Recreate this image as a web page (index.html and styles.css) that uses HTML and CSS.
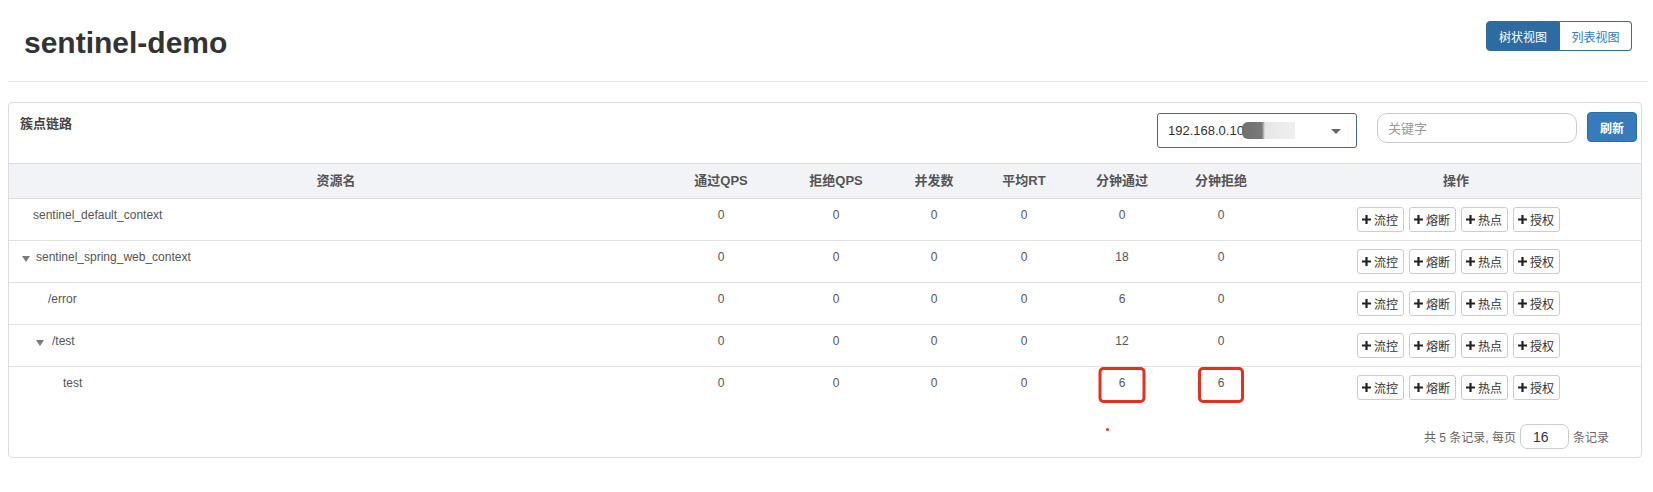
FILE: index.html
```html
<!DOCTYPE html>
<html lang="zh-CN">
<head>
<meta charset="utf-8">
<title>sentinel-demo</title>
<link rel="stylesheet" href="styles.css">
</head>
<body>
<div class="page">
  <div class="top">
    <h1 class="title">sentinel-demo</h1>
    <div class="toggle">
      <button class="tg active">树状视图</button><button class="tg">列表视图</button>
    </div>
  </div>
  <div class="rule"></div>
  <div class="panel">
    <div class="panel-head">
      <div class="panel-title">簇点链路</div>
      <div class="tools">
        <div class="select"><span class="ip">192.168.0.10</span><span class="redact"></span><span class="caret"></span></div>
        <input class="search" type="text" placeholder="关键字">
        <button class="refresh">刷新</button>
      </div>
    </div>
    <table class="grid">
      <colgroup>
        <col class="c-name"><col class="c-pass"><col class="c-block"><col class="c-thread"><col class="c-rt"><col class="c-mpass"><col class="c-mblock"><col class="c-op">
      </colgroup>
      <thead>
        <tr>
          <th>资源名</th><th>通过QPS</th><th>拒绝QPS</th><th>并发数</th><th>平均RT</th><th>分钟通过</th><th>分钟拒绝</th><th>操作</th>
        </tr>
      </thead>
      <tbody>
        <tr>
          <td class="name"><span class="node l0">sentinel_default_context</span></td>
          <td>0</td><td>0</td><td>0</td><td>0</td><td>0</td><td>0</td>
          <td class="ops">
            <div class="btns">
              <button class="op"><svg class="plus" viewBox="0 0 9 9"><path d="M3.4 0h2.2v3.4H9v2.2H5.6V9H3.4V5.6H0V3.4h3.4z"/></svg>流控</button>
              <button class="op"><svg class="plus" viewBox="0 0 9 9"><path d="M3.4 0h2.2v3.4H9v2.2H5.6V9H3.4V5.6H0V3.4h3.4z"/></svg>熔断</button>
              <button class="op"><svg class="plus" viewBox="0 0 9 9"><path d="M3.4 0h2.2v3.4H9v2.2H5.6V9H3.4V5.6H0V3.4h3.4z"/></svg>热点</button>
              <button class="op"><svg class="plus" viewBox="0 0 9 9"><path d="M3.4 0h2.2v3.4H9v2.2H5.6V9H3.4V5.6H0V3.4h3.4z"/></svg>授权</button>
            </div>
          </td>
        </tr>
        <tr>
          <td class="name"><span class="node l0a"><span class="arrow"></span>sentinel_spring_web_context</span></td>
          <td>0</td><td>0</td><td>0</td><td>0</td><td>18</td><td>0</td>
          <td class="ops">
            <div class="btns">
              <button class="op"><svg class="plus" viewBox="0 0 9 9"><path d="M3.4 0h2.2v3.4H9v2.2H5.6V9H3.4V5.6H0V3.4h3.4z"/></svg>流控</button>
              <button class="op"><svg class="plus" viewBox="0 0 9 9"><path d="M3.4 0h2.2v3.4H9v2.2H5.6V9H3.4V5.6H0V3.4h3.4z"/></svg>熔断</button>
              <button class="op"><svg class="plus" viewBox="0 0 9 9"><path d="M3.4 0h2.2v3.4H9v2.2H5.6V9H3.4V5.6H0V3.4h3.4z"/></svg>热点</button>
              <button class="op"><svg class="plus" viewBox="0 0 9 9"><path d="M3.4 0h2.2v3.4H9v2.2H5.6V9H3.4V5.6H0V3.4h3.4z"/></svg>授权</button>
            </div>
          </td>
        </tr>
        <tr>
          <td class="name"><span class="node l1">/error</span></td>
          <td>0</td><td>0</td><td>0</td><td>0</td><td>6</td><td>0</td>
          <td class="ops">
            <div class="btns">
              <button class="op"><svg class="plus" viewBox="0 0 9 9"><path d="M3.4 0h2.2v3.4H9v2.2H5.6V9H3.4V5.6H0V3.4h3.4z"/></svg>流控</button>
              <button class="op"><svg class="plus" viewBox="0 0 9 9"><path d="M3.4 0h2.2v3.4H9v2.2H5.6V9H3.4V5.6H0V3.4h3.4z"/></svg>熔断</button>
              <button class="op"><svg class="plus" viewBox="0 0 9 9"><path d="M3.4 0h2.2v3.4H9v2.2H5.6V9H3.4V5.6H0V3.4h3.4z"/></svg>热点</button>
              <button class="op"><svg class="plus" viewBox="0 0 9 9"><path d="M3.4 0h2.2v3.4H9v2.2H5.6V9H3.4V5.6H0V3.4h3.4z"/></svg>授权</button>
            </div>
          </td>
        </tr>
        <tr>
          <td class="name"><span class="node l1a"><span class="arrow"></span>/test</span></td>
          <td>0</td><td>0</td><td>0</td><td>0</td><td>12</td><td>0</td>
          <td class="ops">
            <div class="btns">
              <button class="op"><svg class="plus" viewBox="0 0 9 9"><path d="M3.4 0h2.2v3.4H9v2.2H5.6V9H3.4V5.6H0V3.4h3.4z"/></svg>流控</button>
              <button class="op"><svg class="plus" viewBox="0 0 9 9"><path d="M3.4 0h2.2v3.4H9v2.2H5.6V9H3.4V5.6H0V3.4h3.4z"/></svg>熔断</button>
              <button class="op"><svg class="plus" viewBox="0 0 9 9"><path d="M3.4 0h2.2v3.4H9v2.2H5.6V9H3.4V5.6H0V3.4h3.4z"/></svg>热点</button>
              <button class="op"><svg class="plus" viewBox="0 0 9 9"><path d="M3.4 0h2.2v3.4H9v2.2H5.6V9H3.4V5.6H0V3.4h3.4z"/></svg>授权</button>
            </div>
          </td>
        </tr>
        <tr class="last">
          <td class="name"><span class="node l2">test</span></td>
          <td>0</td><td>0</td><td>0</td><td>0</td><td><span class="mark m1">6</span></td><td><span class="mark m2">6</span></td>
          <td class="ops">
            <div class="btns">
              <button class="op"><svg class="plus" viewBox="0 0 9 9"><path d="M3.4 0h2.2v3.4H9v2.2H5.6V9H3.4V5.6H0V3.4h3.4z"/></svg>流控</button>
              <button class="op"><svg class="plus" viewBox="0 0 9 9"><path d="M3.4 0h2.2v3.4H9v2.2H5.6V9H3.4V5.6H0V3.4h3.4z"/></svg>熔断</button>
              <button class="op"><svg class="plus" viewBox="0 0 9 9"><path d="M3.4 0h2.2v3.4H9v2.2H5.6V9H3.4V5.6H0V3.4h3.4z"/></svg>热点</button>
              <button class="op"><svg class="plus" viewBox="0 0 9 9"><path d="M3.4 0h2.2v3.4H9v2.2H5.6V9H3.4V5.6H0V3.4h3.4z"/></svg>授权</button>
            </div>
          </td>
        </tr>
      </tbody>
    </table>
    <div class="pager">
      <span class="ptext">共 5 条记录, 每页</span>
      <span class="size">16</span>
      <span class="ptext">条记录</span>
    </div>
    <span class="dot"></span>
  </div>
</div>
</body>
</html>
```

FILE: styles.css
```css
* { box-sizing: border-box; }

body {
  margin: 0;
  background: #fff;
  font-family: "Liberation Sans", "Noto Sans CJK SC", sans-serif;
  color: #555;
}

.page {
  padding: 0 5px 0 8px;
}

.top {
  display: flex;
  justify-content: space-between;
  align-items: flex-start;
  height: 81px;
}

.title {
  margin: 0;
  padding: 26px 0 0 16px;
  font-size: 30px;
  line-height: 34px;
  font-weight: bold;
  color: #333;
}

.toggle {
  display: flex;
  margin: 21px 16px 0 0;
}

.tg {
  height: 30px;
  padding: 0;
  white-space: nowrap;
  font-family: "Liberation Sans", "Noto Sans CJK SC", sans-serif;
  font-size: 12px;
  border: 1px solid #2e6da4;
  background: #fff;
  color: #337ab7;
  cursor: pointer;
}

.tg:first-child {
  border-radius: 4px 0 0 4px;
  width: 74px;
}

.tg:last-child {
  border-radius: 0 4px 4px 0;
  border-left: none;
  width: 72px;
}

.tg.active {
  background: #2d6ca3;
  color: #fff;
}

.rule {
  height: 1px;
  background: #e3e3e3;
}

.panel {
  position: relative;
  margin: 20px 6px 0 0;
  border: 1px solid #dcdcdc;
  border-radius: 4px;
  background: #fff;
}

.panel-head {
  display: flex;
  justify-content: space-between;
  height: 60px;
}

.panel-title {
  padding: 12px 0 0 11px;
  font-size: 13px;
  line-height: 18px;
  font-weight: bold;
  color: #444;
}

.tools {
  display: flex;
  align-items: flex-start;
  padding: 10px 4px 0 0;
}

.select {
  position: relative;
  display: flex;
  align-items: center;
  width: 200px;
  height: 35px;
  padding-left: 10px;
  border: 1px solid #43678f;
  border-radius: 3px;
  font-size: 13px;
  color: #333;
}

.redact {
  width: 53px;
  height: 17px;
  margin-left: -2px;
  background: linear-gradient(90deg, #6f6f6f 0, #7a7a7a 20px, #e6e6e6 23px, #f0f0f0 53px);
  border-radius: 6px 0 0 6px;
}

.caret {
  position: absolute;
  right: 15px;
  top: 15px;
  width: 0;
  height: 0;
  border-left: 5px solid transparent;
  border-right: 5px solid transparent;
  border-top: 5px solid #666;
}

.search {
  width: 200px;
  height: 30px;
  margin-left: 20px;
  padding: 0 10px;
  border: 1px solid #ccc;
  border-radius: 10px;
  font-family: "Liberation Sans", "Noto Sans CJK SC", sans-serif;
  font-size: 13px;
  color: #555;
  outline: none;
}

.search::placeholder {
  color: #999;
}

.refresh {
  width: 50px;
  height: 30px;
  margin: -1px 0 0 10px;
  border: 1px solid #2e6da4;
  border-radius: 4px;
  background: #377bbb;
  color: #fff;
  font-family: "Liberation Sans", "Noto Sans CJK SC", sans-serif;
  font-size: 12px;
  font-weight: bold;
}

.grid {
  width: 100%;
  border-collapse: collapse;
  table-layout: fixed;
}

.c-name { width: 654px; }
.c-pass { width: 116px; }
.c-block { width: 114px; }
.c-thread { width: 82px; }
.c-rt { width: 98px; }
.c-mpass { width: 98px; }
.c-mblock { width: 100px; }
.c-op { width: 370px; }

.grid th {
  padding: 8px;
  line-height: 18px;
  font-size: 13px;
  font-weight: bold;
  color: #555;
  background: #f1f3f6;
  border-top: 1px solid #dcdcdc;
  border-bottom: 1px solid #dcdcdc;
  text-align: center;
}

.grid td {
  padding: 8px;
  line-height: 17px;
  font-size: 12px;
  color: #555;
  text-align: center;
  vertical-align: top;
  border-bottom: 1px solid #e2e2e2;
}

.grid tr.last td {
  border-bottom: none;
}

.grid td.name {
  text-align: left;
  padding-left: 0;
}

.node {
  display: inline-flex;
  align-items: center;
}

.l0 { padding-left: 24px; }
.l0a { padding-left: 13px; }
.l1 { padding-left: 39px; }
.l1a { padding-left: 27px; }
.l2 { padding-left: 54px; }

.arrow {
  width: 0;
  height: 0;
  margin: 3px 6px 0 0;
  border-left: 4px solid transparent;
  border-right: 4px solid transparent;
  border-top: 6px solid #7b7b7b;
}

.l1a .arrow {
  margin-right: 8px;
}

.btns {
  display: flex;
  justify-content: center;
  gap: 5px;
  padding-left: 4px;
}

.op {
  display: inline-flex;
  align-items: center;
  justify-content: center;
  gap: 3px;
  width: 47px;
  height: 25px;
  padding: 0;
  border: 1px solid #ccc;
  border-radius: 3px;
  background: #fff;
  font-family: "Liberation Sans", "Noto Sans CJK SC", sans-serif;
  font-size: 12px;
  color: #333;
}

.plus {
  width: 9px;
  height: 9px;
  fill: #222;
}

.mark {
  position: relative;
  display: inline-block;
}

.mark::after {
  content: "";
  position: absolute;
  top: -8px;
  left: 50%;
  width: 41px;
  height: 30px;
  transform: translateX(-50%);
  border: 3px solid #e3311d;
  border-radius: 5px;
}

.mark.m2::after {
  width: 40px;
}

.pager {
  display: flex;
  justify-content: flex-end;
  align-items: center;
  gap: 4px;
  height: 25px;
  margin: 16px 0 8px;
  padding-right: 32px;
  font-size: 12px;
  color: #666;
}

.size {
  display: inline-flex;
  align-items: center;
  width: 49px;
  height: 25px;
  padding-left: 12px;
  border: 1px solid #ccc;
  border-radius: 7px;
  font-size: 14px;
  color: #333;
}

.dot {
  position: absolute;
  left: 1097px;
  top: 325px;
  width: 3px;
  height: 3px;
  border-radius: 50%;
  background: #e3311d;
}
```
